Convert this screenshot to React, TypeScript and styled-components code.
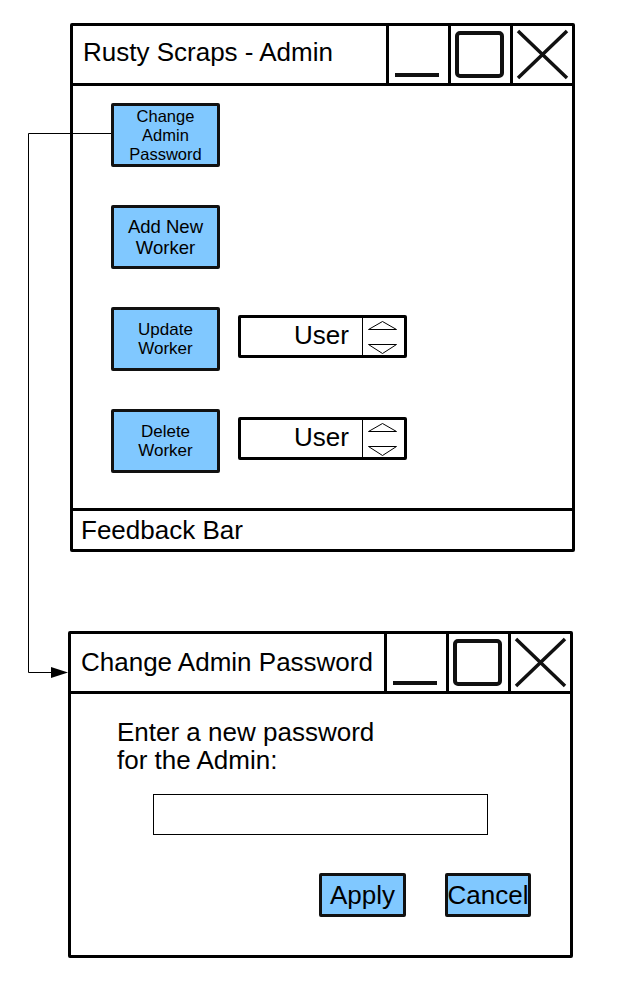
import styled, { createGlobalStyle } from "styled-components";

const GlobalStyle = createGlobalStyle`
  html, body {
    margin: 0;
    padding: 0;
    background: #ffffff;
  }

  body {
    font-family: "Liberation Sans", Arial, sans-serif;
    color: #000000;
  }
`;

const Page = styled.div`
  position: relative;
  width: 617px;
  min-height: 986px;
  box-sizing: border-box;
  padding-top: 23px;
  display: flex;
  flex-direction: column;
`;

const Window = styled.div<{ $left: number; $top: number; $height: number }>`
  width: 505px;
  height: ${(p) => p.$height}px;
  margin-left: ${(p) => p.$left}px;
  margin-top: ${(p) => p.$top}px;
  box-sizing: border-box;
  border: 3px solid #000;
  border-radius: 2px;
  background: #ffffff;
  display: flex;
  flex-direction: column;
`;

const TitleBar = styled.div`
  height: 57px;
  flex-shrink: 0;
  display: flex;
  border-bottom: 3px solid #000;
`;

const Title = styled.div<{ $lift: number }>`
  flex: 1;
  display: flex;
  align-items: center;
  padding: 0 0 ${(p) => p.$lift}px 10px;
  font-size: 26px;
  white-space: nowrap;
`;

const Control = styled.div`
  width: 59px;
  flex-shrink: 0;
  border-left: 3px solid #000;
  display: flex;
  align-items: center;
  justify-content: center;
`;

const Body = styled.div`
  flex: 1;
  display: flex;
  flex-direction: column;
`;

const AdminBody = styled(Body)`
  padding: 17px 0 0 38px;
  gap: 38px;
`;

const Row = styled.div`
  display: flex;
  align-items: flex-start;
  gap: 18px;
`;

const ActionButton = styled.button<{ $font: number; $line: number }>`
  width: 109px;
  height: 64px;
  box-sizing: border-box;
  padding: 0;
  border: 3px solid #111;
  border-radius: 2px;
  background: #80c8ff;
  color: #000;
  font-family: "Liberation Sans", Arial, sans-serif;
  font-size: ${(p) => p.$font}px;
  line-height: ${(p) => p.$line}px;
  text-align: center;
  white-space: pre-line;
`;

const Spin = styled.div`
  width: 169px;
  height: 43px;
  margin-top: 8px;
  box-sizing: border-box;
  border: 3px solid #000;
  border-radius: 2px;
  display: flex;
`;

const SpinValue = styled.div`
  flex: 1;
  display: flex;
  align-items: center;
  justify-content: flex-end;
  padding: 0 13px 2px 0;
  font-size: 26px;
`;

const SpinArrows = styled.div`
  width: 41px;
  border-left: 1px solid #000;
  display: flex;
`;

const FeedbackBar = styled.div`
  height: 38px;
  flex-shrink: 0;
  border-top: 3px solid #000;
  display: flex;
  align-items: center;
  padding-left: 8px;
  font-size: 26px;
`;

const DialogBody = styled(Body)`
  padding: 24px 0 0 46px;
`;

const Prompt = styled.div`
  font-size: 26px;
  line-height: 28px;
`;

const PasswordField = styled.div`
  width: 335px;
  height: 41px;
  box-sizing: border-box;
  margin: 20px 0 0 36px;
  border: 1px solid #000;
`;

const DialogActions = styled.div`
  display: flex;
  gap: 39px;
  margin: 38px 0 0 202px;
`;

const DialogButton = styled.button<{ $width: number }>`
  width: ${(p) => p.$width}px;
  height: 44px;
  box-sizing: border-box;
  padding: 0;
  border: 3px solid #111;
  border-radius: 2px;
  background: #80c8ff;
  color: #000;
  font-family: "Liberation Sans", Arial, sans-serif;
  font-size: 26px;
  line-height: 38px;
  display: flex;
  justify-content: center;
  white-space: nowrap;
  overflow: visible;
`;

const Connector = styled.svg`
  position: absolute;
  left: 0;
  top: 0;
  pointer-events: none;
`;

const WindowControls = () => (
  <>
    <Control>
      <svg width="59" height="57" viewBox="0 0 59 57">
        <rect x="6" y="47" width="44" height="4" fill="#111" />
      </svg>
    </Control>
    <Control>
      <svg width="59" height="57" viewBox="0 0 59 57">
        <rect x="6" y="7" width="45" height="43" rx="3" fill="none" stroke="#111" strokeWidth="4" />
      </svg>
    </Control>
    <Control>
      <svg width="59" height="57" viewBox="0 0 59 57">
        <path d="M5 5 L54 52 M54 5 L5 52" stroke="#111" strokeWidth="3.5" />
      </svg>
    </Control>
  </>
);

const UserSpin = () => (
  <Spin>
    <SpinValue>User</SpinValue>
    <SpinArrows>
      <svg width="41" height="37" viewBox="0 0 41 37">
        <path d="M5.5 11.5 L19.5 3.5 L33.5 11.5 Z" fill="none" stroke="#000" strokeWidth="1" />
        <path d="M5.5 26.5 L33.5 26.5 L19.5 35.5 Z" fill="none" stroke="#000" strokeWidth="1" />
      </svg>
    </SpinArrows>
  </Spin>
);

const App = () => {
  return (
    <>
      <GlobalStyle />
      <Page>
        <Window $left={70} $top={0} $height={529}>
          <TitleBar>
            <Title $lift={5}>Rusty Scraps - Admin</Title>
            <WindowControls />
          </TitleBar>
          <AdminBody>
            <Row>
              <ActionButton $font={16.5} $line={19}>{"Change\nAdmin\nPassword"}</ActionButton>
            </Row>
            <Row>
              <ActionButton $font={18.5} $line={21}>{"Add New\nWorker"}</ActionButton>
            </Row>
            <Row>
              <ActionButton $font={17} $line={19}>{"Update\nWorker"}</ActionButton>
              <UserSpin />
            </Row>
            <Row>
              <ActionButton $font={17} $line={19}>{"Delete\nWorker"}</ActionButton>
              <UserSpin />
            </Row>
          </AdminBody>
          <FeedbackBar>Feedback Bar</FeedbackBar>
        </Window>

        <Window $left={68} $top={79} $height={327}>
          <TitleBar>
            <Title $lift={0}>Change Admin Password</Title>
            <WindowControls />
          </TitleBar>
          <DialogBody>
            <Prompt>
              Enter a new password
              <br />
              for the Admin:
            </Prompt>
            <PasswordField />
            <DialogActions>
              <DialogButton $width={87}>Apply</DialogButton>
              <DialogButton $width={86}>Cancel</DialogButton>
            </DialogActions>
          </DialogBody>
        </Window>

        <Connector width="617" height="986" viewBox="0 0 617 986">
          <path d="M111 133.5 H28.5 V672.5 H52" fill="none" stroke="#000" strokeWidth="1" />
          <polygon points="51,667 51,678 68,672.5" fill="#000" />
        </Connector>
      </Page>
    </>
  );
};

export default App;
